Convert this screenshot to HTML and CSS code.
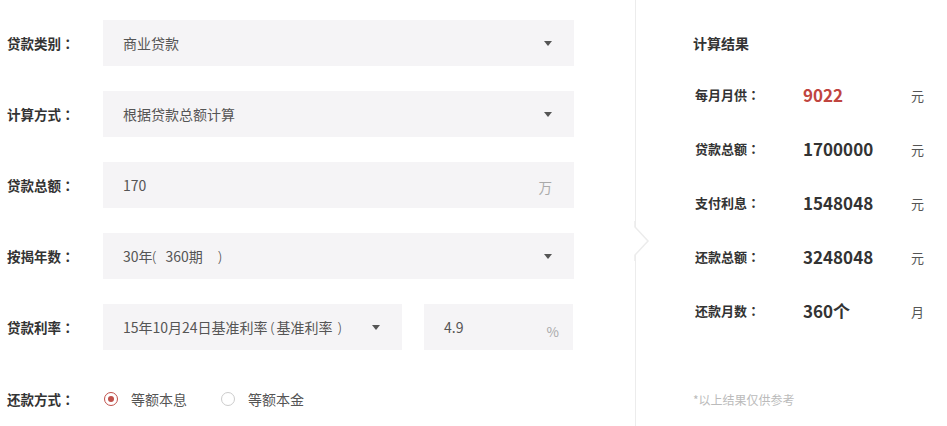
FILE: index.html
```html
<!DOCTYPE html>
<html lang="zh-CN">
<head>
<meta charset="utf-8">
<title>房贷计算器</title>
<link rel="stylesheet" href="styles.css">
</head>
<body>
<div class="calc">
  <div class="form">
    <div class="row">
      <div class="label">贷款类别<span class="colon" lang="zh-TW">：</span></div>
      <div class="field select wide"><span class="val">商业贷款</span><span class="caret"></span></div>
    </div>
    <div class="row">
      <div class="label">计算方式<span class="colon" lang="zh-TW">：</span></div>
      <div class="field select wide"><span class="val">根据贷款总额计算</span><span class="caret"></span></div>
    </div>
    <div class="row">
      <div class="label">贷款总额<span class="colon" lang="zh-TW">：</span></div>
      <div class="field input wide"><span class="val">170</span><span class="unit">万</span></div>
    </div>
    <div class="row">
      <div class="label">按揭年数<span class="colon" lang="zh-TW">：</span></div>
      <div class="field select wide"><span class="val">30年<span class="lp">(</span>360期<span class="rp">)</span></span><span class="caret"></span></div>
    </div>
    <div class="row">
      <div class="label">贷款利率<span class="colon" lang="zh-TW">：</span></div>
      <div class="field select rate"><span class="val">15年10月24日基准利率<span class="lp2">(</span>基准利率<span class="rp2">)</span></span><span class="caret"></span></div>
      <div class="field input pct"><span class="val">4.9</span><span class="unit">%</span></div>
    </div>
    <div class="row radios">
      <div class="label">还款方式<span class="colon" lang="zh-TW">：</span></div>
      <label class="radio on"><span class="dot"></span>等额本息</label>
      <label class="radio"><span class="dot"></span>等额本金</label>
    </div>
  </div>
  <div class="result">
    <svg class="notch" width="20" height="40" viewBox="0 0 20 40"><path d="M1 0 L1 6 L14 20 L1 34 L1 40" fill="#fff" stroke="#ececec" stroke-width="1.5"/></svg>
    <div class="title">计算结果</div>
    <div class="rrow"><span class="rlabel">每月月供<span class="colon" lang="zh-TW">：</span></span><span class="rval red">9022</span><span class="runit">元</span></div>
    <div class="rrow"><span class="rlabel">贷款总额<span class="colon" lang="zh-TW">：</span></span><span class="rval">1700000</span><span class="runit">元</span></div>
    <div class="rrow"><span class="rlabel">支付利息<span class="colon" lang="zh-TW">：</span></span><span class="rval">1548048</span><span class="runit">元</span></div>
    <div class="rrow"><span class="rlabel">还款总额<span class="colon" lang="zh-TW">：</span></span><span class="rval">3248048</span><span class="runit">元</span></div>
    <div class="rrow"><span class="rlabel">还款月数<span class="colon" lang="zh-TW">：</span></span><span class="rval">360个</span><span class="runit">月</span></div>
    <div class="note">*以上结果仅供参考</div>
  </div>
</div>
</body>
</html>
```
FILE: styles.css
```css
html, body {
  margin: 0;
  padding: 0;
  background: #fff;
}
body {
  font-family: "Microsoft YaHei", "Noto Sans CJK SC", "Noto Sans", sans-serif;
  color: #333;
  width: 947px;
  height: 426px;
  overflow: hidden;
}
.colon {
  font-family: "Noto Sans CJK TC", "Noto Sans CJK SC", sans-serif;
}
.lp, .rp, .lp2, .rp2 {
  font-family: "Noto Sans", sans-serif;
  font-weight: 300;
}
.lp { margin: 0 9px 0 0; }
.rp { margin: 0 0 0 15px; }
.lp2 { margin: 0 2px 0 3px; }
.rp2 { margin: 0 0 0 5px; }
.calc {
  display: flex;
  height: 426px;
}
.form {
  width: 628px;
  padding: 20px 0 0 7px;
  border-right: 1.5px solid #ececec;
  display: flex;
  flex-direction: column;
  gap: 25px;
}
.row {
  display: flex;
  align-items: center;
  height: 46px;
}
.label {
  width: 96px;
  font-size: 13.5px;
  font-weight: 700;
  color: #333;
  flex: none;
}
.field {
  height: 46px;
  background: #f5f4f6;
  display: flex;
  align-items: center;
  padding: 0 22px 0 20px;
  box-sizing: border-box;
  font-size: 14px;
  color: #555;
  flex: none;
}
.wide { width: 471px; }
.rate { width: 299px; }
.pct { width: 149px; margin-left: 22px; }
.val { flex: 1; white-space: nowrap; }
.caret {
  width: 0;
  height: 0;
  border-left: 4px solid transparent;
  border-right: 4px solid transparent;
  border-top: 5px solid #555;
}
.unit {
  color: #aaa;
  font-size: 13.5px;
  padding-top: 4px;
}
.pct .unit { padding-top: 8px; margin-right: -8px; }
.radios { margin-top: 1px; }
.radio {
  display: flex;
  align-items: center;
  font-size: 14px;
  color: #555;
  margin-right: 33px;
}
.dot {
  width: 14px;
  height: 14px;
  border-radius: 50%;
  border: 1.5px solid #ccc;
  box-sizing: border-box;
  margin-right: 13px;
  margin-left: 1px;
  position: relative;
}
.radio.on .dot {
  border-color: #c0504a;
}
.radio.on .dot::after {
  content: "";
  position: absolute;
  left: 2.5px;
  top: 2.5px;
  width: 6px;
  height: 6px;
  border-radius: 50%;
  background: #c0504a;
}
.result {
  position: relative;
  flex: 1;
  padding: 33px 0 0 57px;
  display: flex;
  flex-direction: column;
}
.notch {
  position: absolute;
  left: -2px;
  top: 221px;
}
.title {
  font-size: 14px;
  font-weight: 700;
  color: #333;
  height: 20px;
  line-height: 20px;
  margin-bottom: 14px;
}
.rrow {
  display: flex;
  align-items: center;
  height: 54px;
  margin-left: 2px;
}
.rlabel {
  width: 108px;
  font-size: 13px;
  font-weight: 700;
  color: #333;
}
.rval {
  width: 108px;
  font-size: 17px;
  font-weight: 700;
  color: #333;
}
.rval.red { color: #c0453f; }
.runit {
  font-size: 13px;
  color: #555;
  padding-top: 3px;
}
.note {
  margin-top: 54px;
  font-size: 12px;
  color: #bbb;
}
```
